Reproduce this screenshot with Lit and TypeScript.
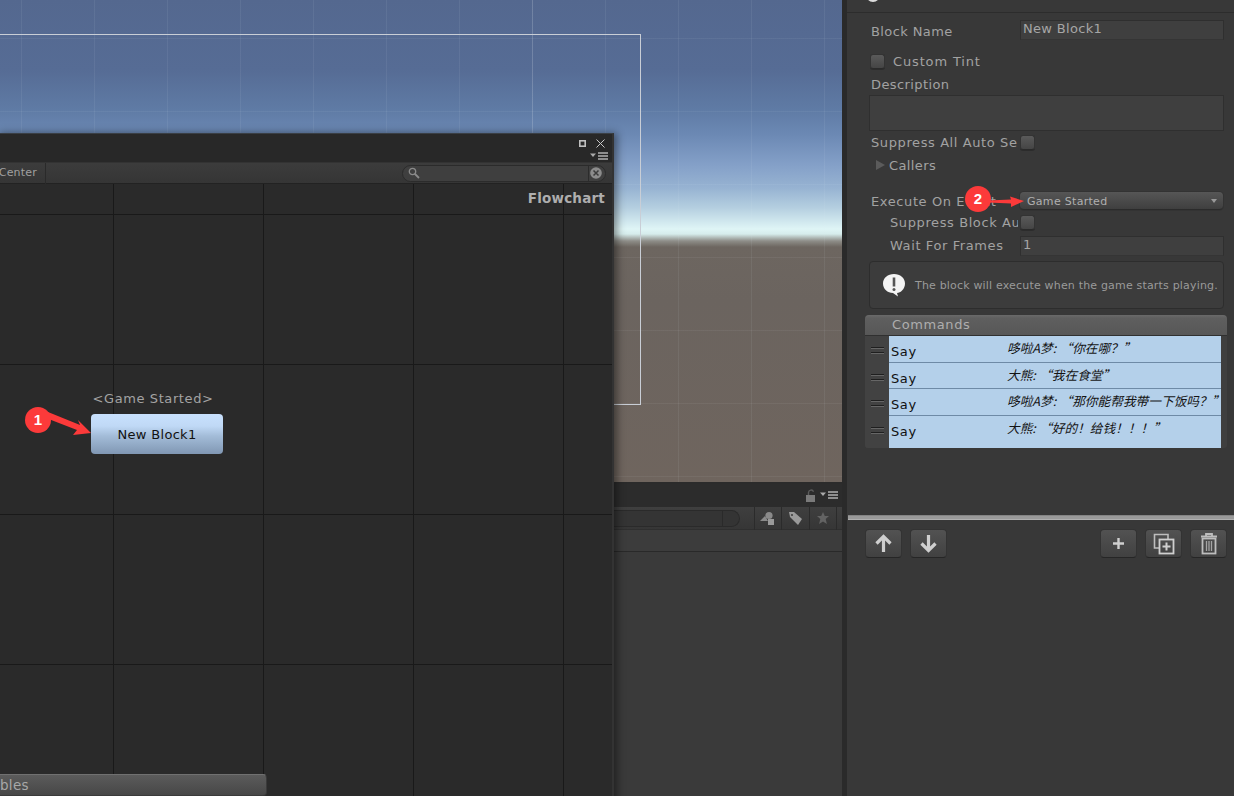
import { LitElement, html, css, svg } from "lit";
import { customElement } from "lit/decorators.js";

const cmds = [
  { text: "哆啦A梦:\u2005“你在哪\uFF1F”", cls: "tall" },
  { text: "大熊:\u2005“我在食堂”", cls: "" },
  { text: "哆啦A梦:\u2005“那你能帮我带一下饭吗\uFF1F”", cls: "tall" },
  { text: "大熊:\u2005“好的\uFF01给钱\uFF01\uFF01\uFF01”", cls: "last" },
];

@customElement("app-root")
export class AppRoot extends LitElement {
  static styles = css`
    :host { display: block; width: 1234px; height: 796px; position: relative; overflow: hidden; background: #383838;
      font-family: "DejaVu Sans", sans-serif; font-size: 13px; letter-spacing: .6px; color: #a2a2a2; }
    * { box-sizing: border-box; }
    .root { display: flex; height: 796px; }
    .left { width: 847px; flex: none; display: flex; flex-direction: column; background: #292929; border-right: 5px solid #2a2a2a; }
    .scene { height: 484px; flex: none; position: relative; overflow: hidden; border-bottom: 2px solid #2b2b2b;
      background:
        linear-gradient(to right, rgba(255,255,255,.12) 1px, transparent 1px) 532px 0 / 2000px 100% no-repeat,
        linear-gradient(to right, rgba(225,235,245,.07) 1px, transparent 1px) 21px 0 / 73px 100%,
        linear-gradient(to bottom, rgba(225,235,245,.06) 1px, transparent 1px) 0 38px / 100% 73px,
        linear-gradient(to bottom, #54688f 0, #566c95 70px, #5f7ba5 110px, #6c89b4 135px, #84a0c8 165px, #97b3d2 188px, #b5cfe0 208px, #dff5f6 229px, #d6ecec 234px, #8e8d88 241px, #6d6660 247px, #6b645f 300px, #6f655e 484px); }
    .frame { position: absolute; left: -10px; top: 34px; width: 651px; height: 371px; border: 1px solid #c9ced6; }
    .panel { flex: 1; display: flex; flex-direction: column; background: #3a3a3a; }
    .ptop { height: 23px; flex: none; background: #2c2c2c; display: flex; justify-content: flex-end; align-items: center; padding-right: 3px; gap: 3px; }
    .ptool { height: 23px; flex: none; display: flex; align-items: center; background: linear-gradient(#3f3f3f, #363636); border-bottom: 1px solid #2f2f2f; }
    .pfield { flex: 1; height: 17px; margin-right: 14px; background: #343434; border-radius: 0 9px 9px 0; border: 1px solid #2a2a2a; border-left: 0; position: relative; }
    .pfield::after { content: ""; position: absolute; right: 16px; top: 0; bottom: 0; width: 1px; background: #2a2a2a; }
    .pcell { width: 27.5px; height: 23px; border-left: 1px solid #2b2b2b; display: flex; align-items: center; justify-content: center; flex: none; }
    .pend { width: 6px; height: 23px; border-left: 1px solid #2b2b2b; flex: none; }
    .psub { height: 22px; flex: none; background: #3c3c3c; border-bottom: 1px solid #292929; }

    .win { position: absolute; left: -4px; top: 133px; width: 618px; height: 680px; background: #2a2a2a; border: 1px solid #3a3f45; border-right: 2px solid #333;
      box-shadow: 3px 0 8px rgba(0,0,0,.45); display: flex; flex-direction: column; }
    .wtitle { height: 28px; flex: none; background: #282828; display: flex; flex-direction: column; align-items: flex-end; padding: 4px 3px 0 0; }
    .wbtns { display: flex; align-items: center; gap: 10px; height: 11px; margin-right: 4px; }
    .wmenu { margin-top: 3px; height: 8px; display: flex; }
    .wbar { height: 22px; flex: none; display: flex; align-items: center; background: linear-gradient(#3c3c3c, #353535); border-top: 1px solid #333; border-bottom: 1px solid #222; }
    .tab { width: 49px; height: 21px; padding-right: 8px; flex: none; text-align: right; border-right: 1px solid #2a2a2a; font-size: 11px; line-height: 19px; color: #a0a0a0; letter-spacing: .2px; overflow: hidden; }
    .wbar .sp { flex: 1; }
    .wsearch { width: 204px; height: 17px; margin-right: 6px; border-radius: 9px; background: #3f3f3f; border: 1px solid #2b2b2b; position: relative; display: flex; align-items: center; padding-left: 5px; justify-content: space-between; padding-right: 3px; }
    .wsearch::after { content: ""; position: absolute; right: 16px; top: 0; bottom: 0; width: 1px; background: #2c2c2c; }
    .canvas { flex: 1; position: relative; overflow: hidden;
      background:
        linear-gradient(to right, #191919 1px, transparent 1px) 116px 0 / 150px 100%,
        linear-gradient(to bottom, #191919 1px, transparent 1px) 0 30px / 100% 150px,
        #2a2a2a; }
    .fc { position: absolute; right: 7px; top: 6px; font-weight: 700; font-size: 13.5px; color: #aeaeae; letter-spacing: .2px; }
    .node-label { position: absolute; left: 95px; width: 122px; top: 207px; text-align: center; white-space: nowrap; color: #a3a3a3; }
    .node { position: absolute; left: 94px; top: 230px; width: 132px; height: 40px; border-radius: 4px; color: #111; letter-spacing: .32px; display: flex; align-items: center; justify-content: center;
      background: linear-gradient(#c8e0fd 0, #c0d9f6 30%, #a3bcd8 55%, #8097b3 100%); }
    .vars { position: absolute; left: -10px; top: 590px; width: 280px; height: 22px; border-radius: 4px; background: linear-gradient(#5b5b5b, #474747); border: 1px solid #3a3a3a; border-top-color: #707070; color: #a8a8a8; padding-left: 12px; line-height: 21px; font-size: 13.5px; letter-spacing: .3px; }

    .insp { flex: 1; padding: 0 10px 0 22px; background: #383838; position: relative; }
    .itop { height: 13px; margin: 0 -10px 0 -22px; border-bottom: 1px solid #2c2c2c; position: relative; overflow: hidden; }
    .itop i { position: absolute; left: 19px; top: -12px; width: 14px; height: 14px; border-radius: 50%; background: #ddd; }
    .row { display: flex; align-items: center; height: 20px; white-space: nowrap; }
    .lab { width: 147px; margin: 0 2px 0 2px; overflow: hidden; flex: none; }
    .ind { padding-left: 19px; }
    .tight { letter-spacing: .4px; }
    .wide { letter-spacing: .85px; }
    .dn { margin-top: 2px; }
    .up { margin-top: -2px; }
    .m1 { margin-top: 7px; }
    .m2 { margin-top: 11px; padding-left: 1px; }
    .desc { margin-top: 4px; height: 18px; }
    .m3 { margin-top: 1px; }
    .m4 { margin-top: 3px; }
    .m5 { margin-top: 16px; }
    .m6 { margin-top: 1px; }
    .m7 { margin-top: 4px; }
    .input { width: 204px; height: 20px; background: #3f3f3f; border: 1px solid #2f2f2f; border-bottom-color: #353535; padding-left: 2px; line-height: 16px; color: #a6a6a6; letter-spacing: .32px; }
    .area { width: 355px; height: 36px; margin-top: 2px; background: #3f3f3f; border: 1px solid #2f2f2f; }
    .chk { width: 15px; height: 15px; flex: none; border-radius: 3px; background: linear-gradient(#5a5a5a, #454545); border: 1px solid #333; border-bottom-color: #2a2a2a; box-shadow: 0 1px 0 #2c2c2c; }
    .ct { margin-left: 8px; }
    .tri { width: 0; height: 0; margin: 0 4px 0 7px; border-left: 9px solid #5b5b5b; border-top: 5px solid transparent; border-bottom: 5px solid transparent; }
    .drop { width: 203px; height: 18px; border-radius: 4px; background: linear-gradient(#565656, #3f3f3f); border-bottom: 1px solid #2b2b2b; box-shadow: 0 0 0 1px #333; font-size: 11px; letter-spacing: .3px; color: #b0b0b0; padding: 1px 6px 0 7px; display: flex; align-items: center; justify-content: space-between; }
    .drop i { width: 0; height: 0; border-top: 4px solid #999; border-left: 3px solid transparent; border-right: 3px solid transparent; }
    .help { width: 355px; height: 48px; margin-top: 5px; border: 1px solid #2d2d2d; border-radius: 4px; background: #3c3c3c; display: flex; align-items: center; gap: 9px; padding-left: 12px; font-size: 11px; color: #9a9a9a; letter-spacing: .18px; white-space: nowrap; }
    .help svg { flex: none; }
    .cmds { width: 362px; margin: 6px 0 0 -4px; background: #3f3f3f; border-radius: 4px 4px 3px 3px; overflow: hidden; }
    .chead { height: 21px; padding-left: 27px; line-height: 19px; background: linear-gradient(#6a6a6a 0, #5f5f5f 3px, #575757 100%); border-bottom: 1px solid #303030; color: #aeaeae; }
    .crow { display: flex; height: 26px; }
    .crow.tall { height: 27px; }
    .crow.last { height: 32px; }
    .hnd { width: 24px; flex: none; background: #424242; display: flex; flex-direction: column; align-items: center; gap: 3px; padding-top: 11px; }
    .hnd i { width: 13px; height: 2px; background: #1f1f1f; border-bottom: 1px solid #666; }
    .cell { width: 332px; background: #b4d0ea; border-bottom: 1px solid #6e8aa6; display: flex; color: #111; position: relative; overflow: hidden; white-space: nowrap; }
    .crow.last .cell { border-bottom: 0; }
    .say { width: 118px; padding: 8px 0 0 2px; line-height: 16px; flex: none; }
    .sum { font-family: "Noto Sans CJK SC", "DejaVu Sans", sans-serif; font-style: italic; font-size: 12.7px; letter-spacing: 0; line-height: 16px; padding-top: 4px; color: #141414; }
    .hr { height: 5px; margin: 67px -9px 0 -21px; background: #9a9a9a; border-top: 1px solid #858585; border-bottom: 1px solid #b0b0b0; }
    .btns { display: flex; margin: 9px 0 0 -4px; width: 362px; gap: 8px; }
    .btns .sp { flex: 1; }
    .btn { width: 37px; height: 29px; border-radius: 4px; background: linear-gradient(#525252, #414141); border: 1px solid #333; border-bottom-color: #262626; display: flex; align-items: center; justify-content: center; }
    svg { display: block; }
    .ann { position: absolute; inset: 0; pointer-events: none; }
    .badge { position: absolute; width: 26px; height: 26px; border-radius: 50%; background: #fc3a3a; color: #fff; text-align: center; font-weight: 700; font-size: 15px; line-height: 25px; letter-spacing: 0; font-family: "Liberation Sans", sans-serif; }
    .b1 { left: 25px; top: 407px; }
    .b2 { left: 965px; top: 186px; }
  `;

  private menuIcon() {
    return html`<svg width="19" height="9" viewBox="0 0 19 9"><path d="M0 1.5h6L3 5z" fill="#aaa"/><path d="M8 1h10M8 4h10M8 7h10" stroke="#b0b0b0" stroke-width="1.6"/></svg>`;
  }

  private row(label: string, cls: string, control: unknown, labCls = "") {
    return html`<div class="row ${cls}"><div class="lab ${labCls}">${label}</div>${control}</div>`;
  }

  render() {
    return html`
      <div class="root">
        <div class="left">
          <div class="scene"><div class="frame"></div></div>
          <div class="panel">
            <div class="ptop">
              <svg width="12" height="13" viewBox="0 0 12 13"><path d="M3.5 6V3.500a2.600 2.600 0 0 1 5 -.8" fill="none" stroke="#5c5c5c" stroke-width="1.400"/><rect x="1" y="6" width="9" height="7" fill="#7a7a7a"/></svg>
              ${this.menuIcon()}
            </div>
            <div class="ptool">
              <div class="pfield"></div>
              <div class="pcell"><svg width="16" height="15" viewBox="0 0 16 15"><circle cx="9" cy="4.500" r="3.600" fill="#8a8a8a"/><path d="M0 10l5-5 3 5z" fill="#8a8a8a"/><rect x="8" y="8" width="6" height="6" fill="#9a9a9a"/></svg></div>
              <div class="pcell"><svg width="15" height="15" viewBox="0 0 15 15"><path d="M1 1h5l8 7-4 6-8-8z" fill="#9a9a9a"/><circle cx="4" cy="4" r="1" fill="#3a3a3a"/></svg></div>
              <div class="pcell"><svg width="14" height="14" viewBox="0 0 14 14"><path d="M7 1l1.800 4H13l-3.300 3 1.200 5L7 10.500 3.100 13l1.200-5L1 5h4.200z" fill="#636363"/></svg></div>
              <div class="pend"></div>
            </div>
            <div class="psub"></div>
          </div>
        </div>

        <div class="insp">
          <div class="itop"><i></i></div>
          ${this.row("Block Name", "m1", html`<div class="input">New Block1</div>`, "tight dn")}
          <div class="row m2"><div class="chk"></div><span class="ct wide">Custom Tint</span></div>
          <div class="row desc"><div class="lab tight">Description</div></div>
          <div class="area"></div>
          ${this.row("Suppress All Auto Select", "m3", html`<div class="chk"></div>`)}
          <div class="row m4"><div class="tri"></div><span class="tight">Callers</span></div>
          ${this.row("Execute On Event", "m5", html`<div class="drop"><span>Game Started</span><i></i></div>`)}
          ${this.row("Suppress Block Autoselect", "m6", html`<div class="chk"></div>`, "ind")}
          ${this.row("Wait For Frames", "m7", html`<div class="input">1</div>`, "ind up")}
          <div class="help">
            <svg width="24" height="24" viewBox="0 0 24 24"><path d="M12 1c6.200 0 11 4 11 9.500S18.500 20 15 20l1 3.500L11 20C5.500 20 1 16 1 10.500S5.800 1 12 1z" fill="#f4f4f4"/><path d="M12 4.500v9" stroke="#555" stroke-width="2.600"/><circle cx="12" cy="16.500" r="1.500" fill="#555"/></svg>
            <span>The block will execute when the game starts playing.</span>
          </div>
          <div class="cmds">
            <div class="chead">Commands</div>
            ${cmds.map(c => html`<div class="crow ${c.cls}">
              <div class="hnd"><i></i><i></i></div>
              <div class="cell"><div class="say">Say</div><div class="sum">${c.text}</div></div>
            </div>`)}
          </div>
          <div class="hr"></div>
          <div class="btns">
            <div class="btn"><svg width="19" height="19" viewBox="0 0 19 19"><path d="M9.500 18V3M2.500 9.500l7-7 7 7" fill="none" stroke="#cfcfcf" stroke-width="3.200"/></svg></div>
            <div class="btn"><svg width="19" height="19" viewBox="0 0 19 19"><path d="M9.500 1v15M2.500 9.500l7 7 7-7" fill="none" stroke="#cfcfcf" stroke-width="3.200"/></svg></div>
            <div class="sp"></div>
            <div class="btn"><svg width="11" height="11" viewBox="0 0 11 11"><path d="M5.500 0v11M0 5.500h11" stroke="#cfcfcf" stroke-width="2.400"/></svg></div>
            <div class="btn"><svg width="22" height="22" viewBox="0 0 22 22"><path d="M15 6V1.500H1.500V15H6" fill="none" stroke="#bdbdbd" stroke-width="1.600"/><rect x="6.500" y="6.500" width="14" height="14" fill="none" stroke="#cfcfcf" stroke-width="1.800"/><path d="M13.500 9.500v8M9.500 13.500h8" stroke="#cfcfcf" stroke-width="2"/></svg></div>
            <div class="btn"><svg width="18" height="22" viewBox="0 0 18 22"><path d="M1 3.500h16M6 3V1h6v2" fill="none" stroke="#bdbdbd" stroke-width="1.800"/><rect x="2.500" y="5.500" width="13" height="15" fill="none" stroke="#bdbdbd" stroke-width="1.800"/><path d="M6.500 8v10M9 8v10M11.500 8v10" stroke="#a5a5a5" stroke-width="1.300"/></svg></div>
          </div>
        </div>
      </div>

      <div class="win">
        <div class="wtitle">
          <div class="wbtns">
            <svg width="7" height="7" viewBox="0 0 7 7"><rect x=".8" y=".8" width="5.400" height="5.400" fill="none" stroke="#c0c0c0" stroke-width="1.600"/></svg>
            <svg width="9" height="9" viewBox="0 0 9 9"><path d="M.5.500l8 8M8.500.500l-8 8" stroke="#c8c8c8" stroke-width="1"/></svg>
          </div>
          <div class="wmenu">${this.menuIcon()}</div>
        </div>
        <div class="wbar">
          <div class="tab">Center</div>
          <div class="sp"></div>
          <div class="wsearch">
            <svg width="12" height="12" viewBox="0 0 12 12"><circle cx="4.500" cy="4.500" r="3.200" fill="none" stroke="#8a8a8a" stroke-width="1.300"/><path d="M7 7l4 4" stroke="#8a8a8a" stroke-width="1.800"/></svg>
            <svg width="12" height="12" viewBox="0 0 12 12"><circle cx="6" cy="6" r="5.800" fill="#8c8c8c"/><path d="M3.500 3.500l5 5M8.500 3.500l-5 5" stroke="#3c3c3c" stroke-width="1.500"/></svg>
          </div>
        </div>
        <div class="canvas">
          <div class="fc">Flowchart</div>
          <div class="node-label">&lt;Game Started&gt;</div>
          <div class="node">New Block1</div>
          <div class="vars">bles</div>
        </div>
      </div>

      <svg class="ann" width="1234" height="796" viewBox="0 0 1234 796">
        ${svg`<polygon points="48,412 80,425 78,420 91,433 73,435 77,430 46,418" fill="#fc3a3a"/>`}
        ${svg`<polygon points="988,200.500 1011,199.500 1010,196.500 1024,201 1011,207 1011,203.500 988,202.500" fill="#fc3a3a"/>`}
      </svg>
      <div class="badge b1">1</div>
      <div class="badge b2">2</div>
    `;
  }
}
